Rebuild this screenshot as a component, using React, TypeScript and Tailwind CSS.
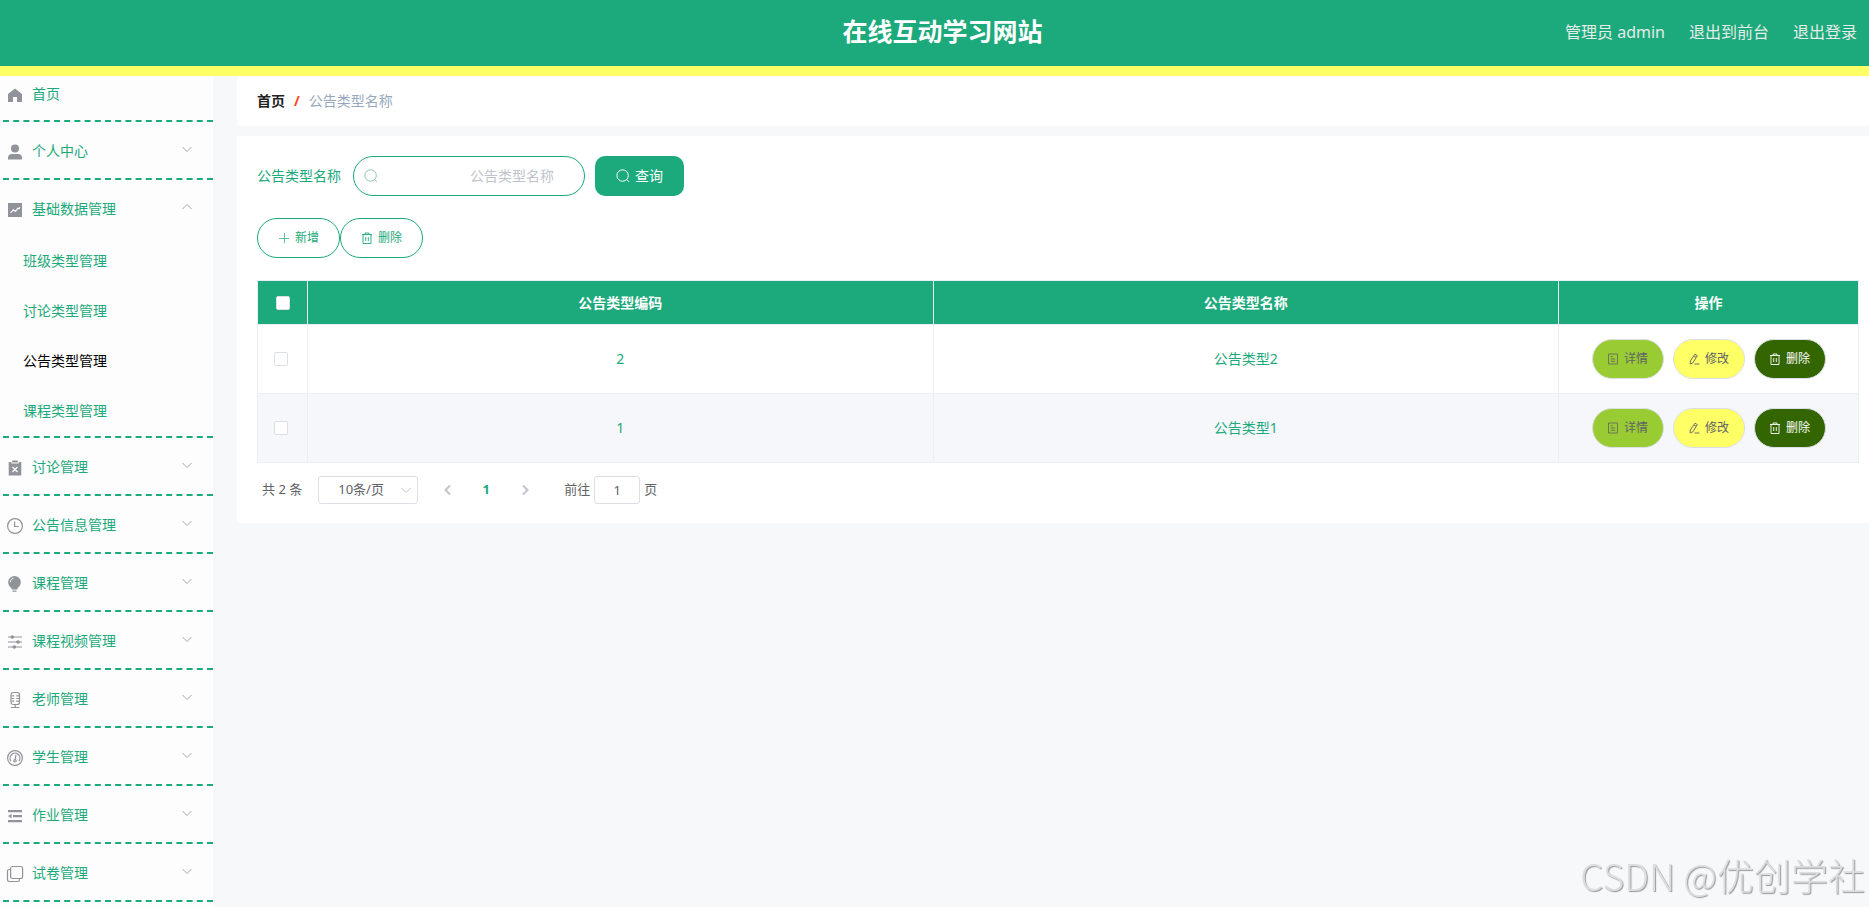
import { useState, type ReactNode } from "react";

const stroke = { fill: "none", stroke: "currentColor", strokeWidth: 1.2 } as const;

const menuIcons: Record<string, ReactNode> = {
  home: <path fill="currentColor" d="M2 8 9 2.6 16 8v8h-5v-5H7v5H2z" />,
  user: (
    <g fill="currentColor">
      <circle cx="9" cy="5.5" r="4" />
      <path d="M2 16.5v-1.8c0-2.2 1.6-3.7 3.8-3.7h6.4c2.2 0 3.8 1.5 3.8 3.7v1.8z" />
    </g>
  ),
  chart: (
    <g>
      <path fill="currentColor" d="M2 2h14v14H2z" />
      <path d="m4.6 12 2.8-3.2 2.2 1.6 2.2-3.2 1.2.6L14 6" fill="none" stroke="#fff" strokeWidth="1.1" />
    </g>
  ),
  clipboard: (
    <g>
      <path fill="currentColor" d="M2.7 3h2.6v1.6h7.4V3h2.6v13.5H2.7zM6.2 1.5h5.6v1.9H6.2z" />
      <path d="m6.5 8 5 5m0-5-5 5" stroke="#fff" strokeWidth="1.2" />
    </g>
  ),
  clock: (
    <g {...stroke}>
      <circle cx="9" cy="9" r="7.4" />
      <path d="M8.6 4.5v5h4.2" />
    </g>
  ),
  bulb: (
    <g>
      <path fill="currentColor" d="M8.5 1A6.3 6.3 0 0 0 2.2 7.3c0 2.6 1.5 4.4 3.4 6.2v1h5.8v-1c1.9-1.8 3.4-3.6 3.4-6.2A6.3 6.3 0 0 0 8.5 1zM6.5 15.5h4v1.3h-4z" />
      <path d="M4.3 7.2c.1-2 1.3-3.5 3.2-4" fill="none" stroke="#fff" strokeWidth="1" />
    </g>
  ),
  sliders: (
    <g>
      <path d="M2 4h14M2 9h14M2 14h14" stroke="currentColor" strokeWidth="1.1" />
      <g fill="currentColor">
        <circle cx="6.3" cy="4" r="1.8" />
        <circle cx="12" cy="9" r="1.8" />
        <circle cx="8.3" cy="14" r="1.8" />
      </g>
    </g>
  ),
  mic: (
    <g {...stroke}>
      <rect x="5" y="1.5" width="8.5" height="12" rx="2.2" />
      <path d="M5.5 4.8h2.7M5.5 7.5h2.7M5.5 10.2h2.7M13 4.8h-2.7M13 7.5h-2.7M13 10.2h-2.7M9.2 13.5v3M5 16.5h8.5" />
    </g>
  ),
  gauge: (
    <g {...stroke}>
      <circle cx="9" cy="9" r="7.4" />
      <path d="M5 12.2A5 5 0 1 1 13 12.2M10 5.5 9.200 10.5" />
      <circle cx="9" cy="11.8" r="1.2" />
    </g>
  ),
  fold: (
    <g fill="currentColor">
      <path d="M2 3h14v2.2H2zM7 8h9v2.2H7zM2 13h14v2.2H2zM2 9.1 5.5 6.8v4.6z" />
    </g>
  ),
  copy: (
    <g {...stroke}>
      <rect x="4.6" y="1.5" width="12" height="12" rx="2" />
      <path d="M4.6 4.5H3.2c-1 0-1.7.7-1.7 1.7v8.6c0 1 .7 1.7 1.7 1.7h8.6c1 0 1.7-.7 1.7-1.7v-1.3" />
    </g>
  ),
};

function Chevron({ dir, className }: { dir: "up" | "down" | "left" | "right"; className?: string }) {
  const d = {
    up: "M1.5 8 6 3.5 10.5 8",
    down: "M1.5 4 6 8.5 10.5 4",
    left: "M8 1.5 3.5 6 8 10.5",
    right: "M4 1.5 8.5 6 4 10.5",
  }[dir];
  return (
    <svg viewBox="0 0 12 12" className={className} fill="none" stroke="currentColor" aria-hidden="true">
      <path d={d} />
    </svg>
  );
}

function SearchIcon() {
  return (
    <svg viewBox="0 0 14 14" className="size-[14px]" fill="none" stroke="currentColor" aria-hidden="true">
      <circle cx="6.6" cy="6.5" r="5.7" />
      <path d="m10.6 10.4 2.4 2.4" />
    </svg>
  );
}

function TrashIcon() {
  return (
    <svg viewBox="0 0 12 12" className="size-3" fill="none" stroke="currentColor" strokeWidth="0.9" aria-hidden="true">
      <path d="M1 2.5h10M4 2.5v-1.5h4v1.5M2 2.5v9h8v-9M4.7 5v4M7.3 5v4" />
    </svg>
  );
}

function PlusIcon() {
  return (
    <svg viewBox="0 0 12 12" className="size-3" stroke="currentColor" strokeWidth="0.7" aria-hidden="true">
      <path d="M1 6.5h10M6.5 1v10" />
    </svg>
  );
}

function DocIcon() {
  return (
    <svg viewBox="0 0 12 12" className="size-3" fill="none" stroke="currentColor" strokeWidth="0.8" aria-hidden="true">
      <path d="M1.5 1h9v10h-9zM3.8 3.7h2M3.8 6h4.4M3.8 8.3h4.4" />
    </svg>
  );
}

function PencilIcon() {
  return (
    <svg viewBox="0 0 12 12" className="size-3" fill="none" stroke="currentColor" strokeWidth="0.9" aria-hidden="true">
      <path d="M7 1.2 9.3 2.6 4.9 9.8 2.2 11 2.3 8zM6 3l2.3 1.4M6.5 11h5" />
    </svg>
  );
}

const menu = [
  { label: "个人中心", icon: "user" },
  { label: "基础数据管理", icon: "chart", children: ["班级类型管理", "讨论类型管理", "公告类型管理", "课程类型管理"] },
  { label: "讨论管理", icon: "clipboard" },
  { label: "公告信息管理", icon: "clock" },
  { label: "课程管理", icon: "bulb" },
  { label: "课程视频管理", icon: "sliders" },
  { label: "老师管理", icon: "mic" },
  { label: "学生管理", icon: "gauge" },
  { label: "作业管理", icon: "fold" },
  { label: "试卷管理", icon: "copy" },
];

function MenuIcon({ name }: { name: string }) {
  return (
    <svg viewBox="0 0 18 18" className="mt-[2px] size-[18px] shrink-0 text-[#909399]" aria-hidden="true">
      {menuIcons[name]}
    </svg>
  );
}

function Sidebar() {
  return (
    <nav className="w-[213px] shrink-0 bg-[#fdfdfd] pl-[3px] text-sm text-[#1ca97b]">
      <a href="#home" className="flex h-[46px] items-center gap-2 border-b-2 border-dashed border-[#1ca97b] pb-2 pl-[3px]">
        <MenuIcon name="home" />
        首页
      </a>
      {menu.map((item) => (
        <div key={item.label} className="border-b-2 border-dashed border-[#1ca97b]">
          <button type="button" className="flex h-14 w-full items-center gap-2 pr-5 pl-[3px] pt-[2px] text-left">
            <MenuIcon name={item.icon} />
            <span className="flex-1">{item.label}</span>
            <Chevron dir={item.children ? "up" : "down"} className="mb-1 size-3 text-[#a5a8ad]" />
          </button>
          {item.children?.map((child) => (
            <a
              key={child}
              href="#type"
              className={
                child === "公告类型管理"
                  ? "flex h-[50px] items-center pl-5 text-black"
                  : "flex h-[50px] items-center pl-5"
              }
            >
              {child}
            </a>
          ))}
        </div>
      ))}
    </nav>
  );
}

const checkbox =
  "block size-[14px] appearance-none rounded-[2px] border border-[#dcdfe6] bg-white checked:border-[#1ca97b] checked:bg-[#1ca97b]";
const th = "h-11 border-r border-b border-[#ebeef5] font-bold";
const td = "h-[69px] border-r border-b border-[#ebeef5]";
const rowButton = "flex h-10 w-[72px] items-center justify-center gap-[5px] rounded-full border border-[#dcdfe6] text-xs";

function DataTable() {
  const rows = [
    { code: 2, name: "公告类型2" },
    { code: 1, name: "公告类型1" },
  ];
  return (
    <table className="mt-[22px] w-full table-fixed border-separate border-spacing-0 border-t border-l border-[#ebeef5] text-center text-sm text-[#1ca97b]">
      <colgroup>
        <col className="w-[50px]" />
        <col />
        <col />
        <col className="w-[300px]" />
      </colgroup>
      <thead className="bg-[#1ca97b] text-white">
        <tr>
          <th className={th}>
            <input type="checkbox" aria-label="全选" className={checkbox + " mx-auto"} />
          </th>
          <th className={th}>公告类型编码</th>
          <th className={th}>公告类型名称</th>
          <th className={th}>操作</th>
        </tr>
      </thead>
      <tbody>
        {rows.map((row) => (
          <tr key={row.code} className="even:bg-[#f5f7fa]">
            <td className={td}>
              <input type="checkbox" aria-label={row.name} className={checkbox + " ml-4"} />
            </td>
            <td className={td}>{row.code}</td>
            <td className={td}>{row.name}</td>
            <td className={td}>
              <div className="flex justify-center gap-[9px]">
                <button type="button" className={rowButton + " bg-[#9c3] text-[#606266]"}>
                  <DocIcon />
                  详情
                </button>
                <button type="button" className={rowButton + " bg-[#ff6] text-[#606266]"}>
                  <PencilIcon />
                  修改
                </button>
                <button type="button" className={rowButton + " bg-[#360] text-white"}>
                  <TrashIcon />
                  删除
                </button>
              </div>
            </td>
          </tr>
        ))}
      </tbody>
    </table>
  );
}

function Pagination() {
  const [page, setPage] = useState("1");
  return (
    <div className="mt-3 flex h-[30px] items-center pl-[5px] text-[13px] text-[#606266]">
      <span>共 2 条</span>
      <div className="relative ml-4">
        <select
          aria-label="每页条数"
          className="block h-7 w-[100px] appearance-none rounded-[3px] border border-[#dcdfe6] bg-white pr-[30px] pl-[19px] text-[13px]"
        >
          <option>10条/页</option>
          <option>20条/页</option>
        </select>
        <Chevron dir="down" className="pointer-events-none absolute top-2 right-[6px] size-3 text-[#c0c4cc]" />
      </div>
      <button type="button" aria-label="上一页" className="ml-6 text-[#c0c4cc]">
        <Chevron dir="left" className="size-3 stroke-2" />
      </button>
      <button type="button" className="ml-[26px] w-3 font-bold text-[#1ca97b]">
        1
      </button>
      <button type="button" aria-label="下一页" className="ml-[27px] text-[#c0c4cc]">
        <Chevron dir="right" className="size-3 stroke-2" />
      </button>
      <label className="ml-[33px] flex items-center gap-1">
        前往
        <input
          value={page}
          onChange={(e) => setPage(e.target.value)}
          className="h-7 w-[46px] rounded-[3px] border border-[#dcdfe6] text-center"
        />
        页
      </label>
    </div>
  );
}

export default function App() {
  return (
    <div className="flex min-h-screen flex-col bg-[#f7f8fa] font-['Noto_Sans','Noto_Sans_CJK_SC',sans-serif]">
      <header className="grid h-[76px] grid-cols-[1fr_auto_1fr] items-center border-b-10 border-[#ff6] bg-[#1ca97b] pl-4 text-[#e6ece9]">
        <h1 className="col-start-2 pb-[2px] text-[25px] font-bold text-white">在线互动学习网站</h1>
        <div className="flex justify-end gap-6 pr-3 pb-[2px] text-base">
          <span>管理员 admin</span>
          <a href="#front">退出到前台</a>
          <a href="#logout">退出登录</a>
        </div>
      </header>
      <div className="flex flex-1">
        <Sidebar />
        <main className="ml-6 min-w-0 flex-1">
          <div className="flex h-[50px] items-center rounded-sm bg-white pl-5 text-sm">
            <a href="#home" className="font-bold text-[#222]">
              首页
            </a>
            <span className="mx-[9px] font-bold text-[#f42]">/</span>
            <span className="text-[#97a8be]">公告类型名称</span>
          </div>
          <section className="mt-[10px] bg-white pt-5 pr-[10px] pb-[18px] pl-5">
            <form className="flex items-center text-sm" onSubmit={(e) => e.preventDefault()}>
              <label htmlFor="type-name" className="mr-3 text-[#1ca97b]">
                公告类型名称
              </label>
              <div className="flex h-10 w-[232px] items-center rounded-full border border-[#1ca97b] pr-[30px] pl-[10px] text-[#8fc3b0]">
                <SearchIcon />
                <input
                  id="type-name"
                  placeholder="公告类型名称"
                  className="w-0 flex-1 bg-transparent text-right text-[#1ca97b] outline-none placeholder:text-[#c0c4cc]"
                />
              </div>
              <button
                type="submit"
                className="ml-[10px] flex h-10 w-[89px] items-center justify-center gap-[5px] rounded-[10px] bg-[#1ca97b] text-white"
              >
                <SearchIcon />
                查询
              </button>
            </form>
            <div className="mt-[22px] flex text-xs text-[#1ca97b]">
              <button type="button" className="flex h-10 w-[83px] items-center justify-center gap-[5px] rounded-full border border-[#1ca97b]">
                <PlusIcon />
                新增
              </button>
              <button type="button" className="flex h-10 w-[83px] items-center justify-center gap-[5px] rounded-full border border-[#1ca97b]">
                <TrashIcon />
                删除
              </button>
            </div>
            <DataTable />
            <Pagination />
          </section>
        </main>
      </div>
      <div className="pointer-events-none fixed right-1 bottom-1 font-['Noto_Sans_CJK_SC',sans-serif] text-[37px] leading-[56px] font-light text-[#dcdddf] [text-shadow:1px_1px_1px_#999]">
        CSDN @优创学社
      </div>
    </div>
  );
}
